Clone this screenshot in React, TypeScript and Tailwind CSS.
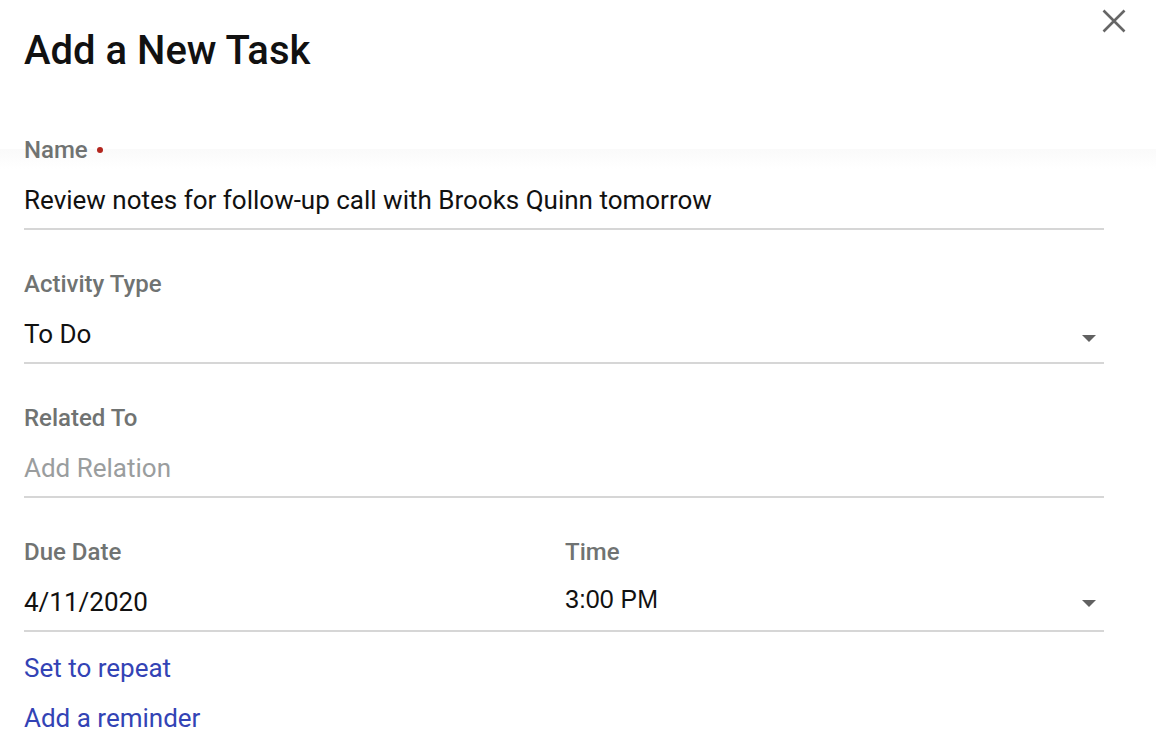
const Caret = () => (
  <svg width="14" height="7" viewBox="0 0 14 7" className="shrink-0">
    <path d="M0 0 L14 0 L7 7 Z" fill="#616161" />
  </svg>
)

const Label = ({ children, required }: { children: React.ReactNode; required?: boolean }) => (
  <div className="flex items-center gap-[9px] h-[24px] text-[24px] font-medium leading-[24px] text-[#707372]">
    {children}
    {required && <span className="w-[6px] h-[6px] rounded-full bg-[#b3261e]" />}
  </div>
)

const Field = ({
  label,
  required,
  value,
  placeholder,
  select,
}: {
  label: string
  required?: boolean
  value?: string
  placeholder?: string
  select?: boolean
}) => (
  <div className="pt-[42px]">
    <Label required={required}>{label}</Label>
    <div className="mt-[23px] flex items-center justify-between pb-[13px] border-b-2 border-[#d6d6d6]">
      <span
        className={`text-[26px] leading-[30px] ${value ? 'text-[#111]' : 'text-[#9a9d9e]'}`}
      >
        {value ?? placeholder}
      </span>
      {select && (
        <span className="mr-[8px] mt-[8px]">
          <Caret />
        </span>
      )}
    </div>
  </div>
)

export default function App() {
  return (
    <div
      className="w-[1156px] h-[748px] bg-white overflow-hidden relative"
      style={{ fontFamily: 'Roboto, "Noto Sans", sans-serif' }}
    >
      <div className="absolute left-0 right-0 top-[149px] h-[20px] bg-gradient-to-b from-[#fafafa] to-white pointer-events-none" />
      <button className="absolute right-[30px] top-[9px]">
        <svg width="24" height="24" viewBox="0 0 24 24">
          <path d="M1.5 1.5 L22.5 22.5 M22.5 1.5 L1.5 22.5" stroke="#666" strokeWidth="2.6" fill="none" />
        </svg>
      </button>
      <div className="relative px-[24px] pt-[27px] h-[96px]">
        <h1 className="text-[40px] font-medium leading-[48px] text-[#111]">Add a New Task</h1>
      </div>
      <div className="relative ml-[24px] w-[1080px]">
        <Field label="Name" required value="Review notes for follow-up call with Brooks Quinn tomorrow" />
        <Field label="Activity Type" value="To Do" select />
        <Field label="Related To" placeholder="Add Relation" />
        <div className="grid grid-cols-[541px_1fr] pt-[42px] border-b-2 border-[#d6d6d6] pb-[13px]">
          <div>
            <Label>Due Date</Label>
            <div className="mt-[23px] text-[26px] leading-[30px] text-[#111]">4/11/2020</div>
          </div>
          <div>
            <Label>Time</Label>
            <div className="mt-[20px] flex items-center justify-between">
              <span
                className="text-[25px] leading-[30px] text-[#111]"
                style={{ fontFamily: '"Liberation Sans", Arial, sans-serif' }}
              >
                3:00 PM
              </span>
              <span className="mr-[8px] mt-[8px]">
                <Caret />
              </span>
            </div>
          </div>
        </div>
        <div className="mt-[21px] flex flex-col gap-[20px] text-[26px] leading-[30px] text-[#3343b5]">
          <a>Set to repeat</a>
          <a>Add a reminder</a>
        </div>
      </div>
    </div>
  )
}
